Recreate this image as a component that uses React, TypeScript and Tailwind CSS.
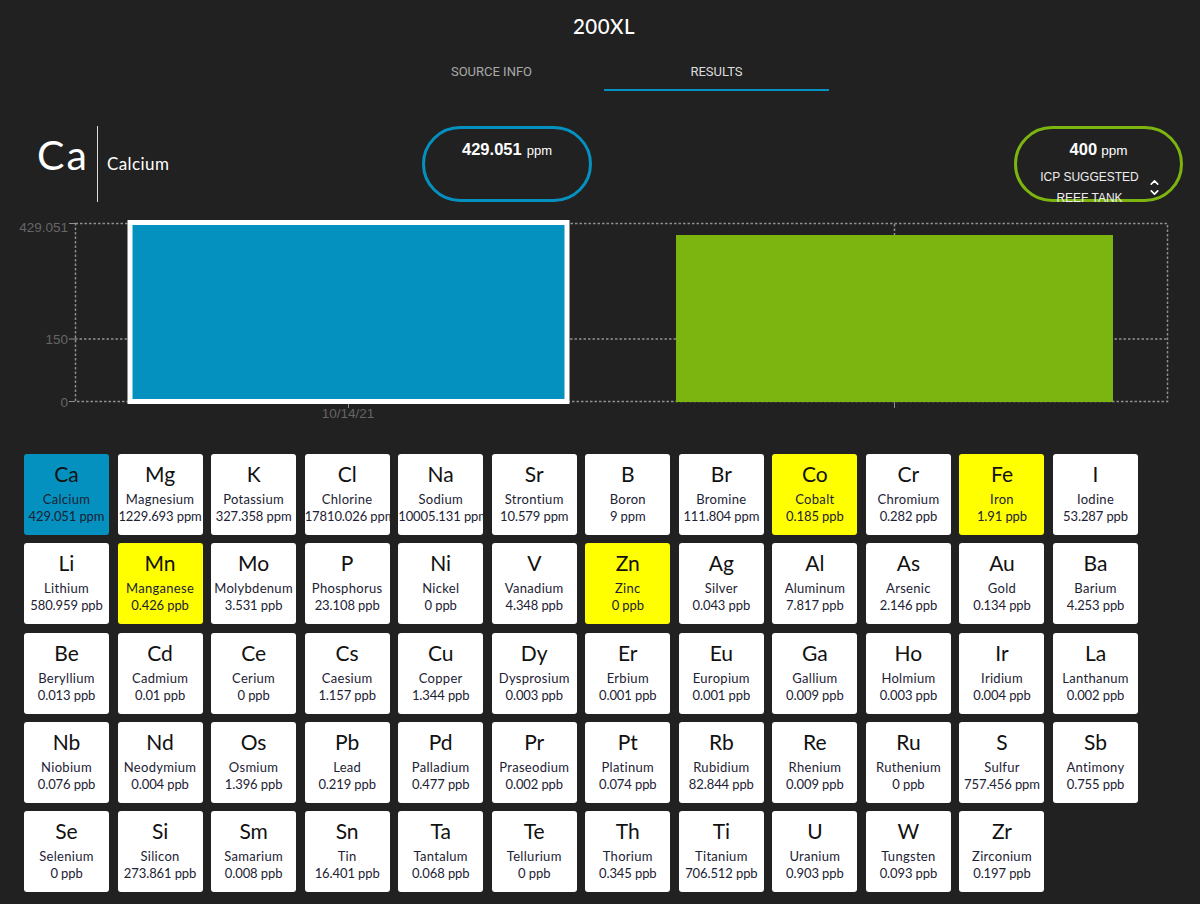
import React from "react";
import { ChevronDown, ChevronUp } from "lucide-react";

type Element = {
	symbol: string;
	name: string;
	value: string;
	tone?: "active" | "warn";
};

const elements: Element[] = [
	{ symbol: "Ca", name: "Calcium", value: "429.051 ppm", tone: "active" },
	{ symbol: "Mg", name: "Magnesium", value: "1229.693 ppm" },
	{ symbol: "K", name: "Potassium", value: "327.358 ppm" },
	{ symbol: "Cl", name: "Chlorine", value: "17810.026 ppm" },
	{ symbol: "Na", name: "Sodium", value: "10005.131 ppm" },
	{ symbol: "Sr", name: "Strontium", value: "10.579 ppm" },
	{ symbol: "B", name: "Boron", value: "9 ppm" },
	{ symbol: "Br", name: "Bromine", value: "111.804 ppm" },
	{ symbol: "Co", name: "Cobalt", value: "0.185 ppb", tone: "warn" },
	{ symbol: "Cr", name: "Chromium", value: "0.282 ppb" },
	{ symbol: "Fe", name: "Iron", value: "1.91 ppb", tone: "warn" },
	{ symbol: "I", name: "Iodine", value: "53.287 ppb" },
	{ symbol: "Li", name: "Lithium", value: "580.959 ppb" },
	{ symbol: "Mn", name: "Manganese", value: "0.426 ppb", tone: "warn" },
	{ symbol: "Mo", name: "Molybdenum", value: "3.531 ppb" },
	{ symbol: "P", name: "Phosphorus", value: "23.108 ppb" },
	{ symbol: "Ni", name: "Nickel", value: "0 ppb" },
	{ symbol: "V", name: "Vanadium", value: "4.348 ppb" },
	{ symbol: "Zn", name: "Zinc", value: "0 ppb", tone: "warn" },
	{ symbol: "Ag", name: "Silver", value: "0.043 ppb" },
	{ symbol: "Al", name: "Aluminum", value: "7.817 ppb" },
	{ symbol: "As", name: "Arsenic", value: "2.146 ppb" },
	{ symbol: "Au", name: "Gold", value: "0.134 ppb" },
	{ symbol: "Ba", name: "Barium", value: "4.253 ppb" },
	{ symbol: "Be", name: "Beryllium", value: "0.013 ppb" },
	{ symbol: "Cd", name: "Cadmium", value: "0.01 ppb" },
	{ symbol: "Ce", name: "Cerium", value: "0 ppb" },
	{ symbol: "Cs", name: "Caesium", value: "1.157 ppb" },
	{ symbol: "Cu", name: "Copper", value: "1.344 ppb" },
	{ symbol: "Dy", name: "Dysprosium", value: "0.003 ppb" },
	{ symbol: "Er", name: "Erbium", value: "0.001 ppb" },
	{ symbol: "Eu", name: "Europium", value: "0.001 ppb" },
	{ symbol: "Ga", name: "Gallium", value: "0.009 ppb" },
	{ symbol: "Ho", name: "Holmium", value: "0.003 ppb" },
	{ symbol: "Ir", name: "Iridium", value: "0.004 ppb" },
	{ symbol: "La", name: "Lanthanum", value: "0.002 ppb" },
	{ symbol: "Nb", name: "Niobium", value: "0.076 ppb" },
	{ symbol: "Nd", name: "Neodymium", value: "0.004 ppb" },
	{ symbol: "Os", name: "Osmium", value: "1.396 ppb" },
	{ symbol: "Pb", name: "Lead", value: "0.219 ppb" },
	{ symbol: "Pd", name: "Palladium", value: "0.477 ppb" },
	{ symbol: "Pr", name: "Praseodium", value: "0.002 ppb" },
	{ symbol: "Pt", name: "Platinum", value: "0.074 ppb" },
	{ symbol: "Rb", name: "Rubidium", value: "82.844 ppb" },
	{ symbol: "Re", name: "Rhenium", value: "0.009 ppb" },
	{ symbol: "Ru", name: "Ruthenium", value: "0 ppb" },
	{ symbol: "S", name: "Sulfur", value: "757.456 ppm" },
	{ symbol: "Sb", name: "Antimony", value: "0.755 ppb" },
	{ symbol: "Se", name: "Selenium", value: "0 ppb" },
	{ symbol: "Si", name: "Silicon", value: "273.861 ppb" },
	{ symbol: "Sm", name: "Samarium", value: "0.008 ppb" },
	{ symbol: "Sn", name: "Tin", value: "16.401 ppb" },
	{ symbol: "Ta", name: "Tantalum", value: "0.068 ppb" },
	{ symbol: "Te", name: "Tellurium", value: "0 ppb" },
	{ symbol: "Th", name: "Thorium", value: "0.345 ppb" },
	{ symbol: "Ti", name: "Titanium", value: "706.512 ppb" },
	{ symbol: "U", name: "Uranium", value: "0.903 ppb" },
	{ symbol: "W", name: "Tungsten", value: "0.093 ppb" },
	{ symbol: "Zr", name: "Zirconium", value: "0.197 ppb" },
];

const ElementCard = ({ symbol, name, value, tone }: Element) => {
	let toneClass = "bg-white";
	if (tone === "active") {
		toneClass = "bg-[#0591c0]";
	} else if (tone === "warn") {
		toneClass = "bg-[#ffff00]";
	}

	return (
		<div className={`h-[81px] overflow-hidden rounded-[3px] pt-[7px] text-center whitespace-nowrap text-[#1c2233] ${toneClass}`}>
			<div className="text-[21px] leading-[26px] text-[#111]">{symbol}</div>
			<div className="mt-[4px] text-[13px] leading-[17px] tracking-[0.3px]">{name}</div>
			<div className="text-[13px] leading-[17px] tracking-[-0.1px]">{value}</div>
		</div>
	);
};

const Chart = () => (
	<svg
		width="1200"
		height="225"
		viewBox="0 0 1200 225"
		className="block"
		fontFamily="'Liberation Sans', Arial, sans-serif"
	>
		<g stroke="#8f8f8f" strokeWidth="1.5" strokeDasharray="2.5 2" fill="none">
			<rect x="75.5" y="14.5" width="1092" height="178" />
			<line x1="75" y1="130" x2="1168" y2="130" />
			<line x1="894.5" y1="15" x2="894.5" y2="26" />
		</g>
		<g stroke="#8f8f8f" strokeWidth="1">
			<line x1="69" y1="14.5" x2="75" y2="14.5" />
			<line x1="69" y1="130" x2="75" y2="130" />
			<line x1="69" y1="192.5" x2="75" y2="192.5" />
			<line x1="894.5" y1="193" x2="894.5" y2="199" />
			<line x1="348.5" y1="195" x2="348.5" y2="199" />
		</g>
		<rect x="130" y="13.5" width="437" height="179" fill="#0591c0" stroke="#ffffff" strokeWidth="5" />
		<rect x="676" y="26" width="437" height="167" fill="#7cb50f" />
		<g fill="#666666" fontSize="13.5" textAnchor="end">
			<text x="68" y="23">429.051</text>
			<text x="68" y="135">150</text>
			<text x="68" y="198">0</text>
		</g>
		<text x="348" y="209" fill="#666666" fontSize="13.5" textAnchor="middle">10/14/21</text>
	</svg>
);

export default function App() {
	return (
		<div className="h-[904px] w-[1200px] overflow-hidden bg-[#212121] font-['Lato',sans-serif] text-white">
			<h1 className="pt-[14px] pl-[8px] text-center text-[20.5px] leading-[24px] font-medium tracking-[0.5px]">200XL</h1>

			<div className="mt-[13px] ml-[379px] flex font-['Roboto',sans-serif] text-[13px]">
				<div className="flex h-[40px] w-[225px] items-center justify-center border-b-2 border-transparent pt-[3px] text-[#aaaaaa]">SOURCE INFO</div>
				<div className="flex h-[40px] w-[225px] items-center justify-center border-b-2 border-[#0591c0] pt-[3px] text-[#dddddd]">RESULTS</div>
			</div>

			<div className="mt-[35px] flex h-[76px] items-start">
				<div className="ml-[37px] flex h-[76px] w-[386px] items-stretch">
					<div className="w-[60px] pt-[2px] text-[41px] leading-[54px] tracking-[2px]">Ca</div>
					<div className="w-px bg-[#dddddd]" />
					<div className="pt-[27px] pl-[9px] text-[17px] leading-[22px] tracking-[0.4px]">Calcium</div>
				</div>

				<div className="-ml-px h-[76px] w-[170px] rounded-[38px] border-[3.5px] border-[#0591c0] pt-[9px] text-center font-['Liberation_Sans',sans-serif]">
					<span className="text-[16.5px] leading-[20px] font-bold">429.051</span>
					<span className="ml-[5px] text-[13px] font-medium">ppm</span>
				</div>

				<div className="relative mr-[17px] ml-auto h-[76px] w-[169px] rounded-[38px] border-[3.5px] border-[#7cb50f] pt-[9px] text-center font-['Liberation_Sans',sans-serif]">
					<span className="text-[16.5px] leading-[20px] font-bold">400</span>
					<span className="ml-[4px] text-[13.5px] font-medium">ppm</span>
					<div className="absolute top-[38px] left-[19px] w-[107px] text-[12px] leading-[21px] text-[#eeeeee]">
						<div>ICP SUGGESTED</div>
						<div>REEF TANK</div>
					</div>
					<div className="absolute top-[47px] left-[131px] flex flex-col">
						<ChevronUp size={13} strokeWidth={3} className="-mb-[3px]" />
						<ChevronDown size={13} strokeWidth={3} />
					</div>
				</div>
			</div>

			<div className="mt-[7px]">
				<Chart />
			</div>

			<div className="mt-[20px] ml-[24px] grid grid-cols-[repeat(12,85px)] gap-x-[8.55px] gap-y-[8.25px]">
				{elements.map((element) => (
					<ElementCard
						key={element.symbol}
						{...element}
					/>
				))}
			</div>
		</div>
	);
}
